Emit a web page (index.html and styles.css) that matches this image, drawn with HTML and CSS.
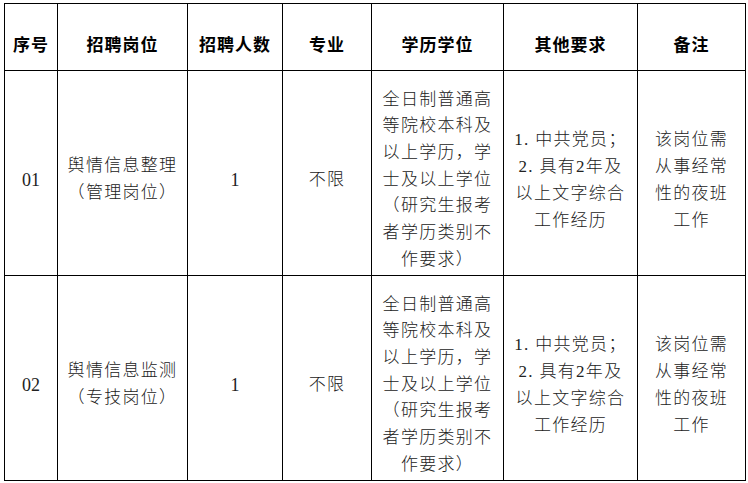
FILE: index.html
```html
<!DOCTYPE html>
<html lang="zh-CN">
<head>
<meta charset="utf-8">
<title>招聘岗位</title>
<link rel="stylesheet" href="styles.css">
</head>
<body>
<table class="jobs">
  <colgroup>
    <col class="c1"><col class="c2"><col class="c3"><col class="c4"><col class="c5"><col class="c6"><col class="c7">
  </colgroup>
  <thead>
    <tr class="head">
      <th>序号</th>
      <th>招聘岗位</th>
      <th>招聘人数</th>
      <th>专业</th>
      <th>学历学位</th>
      <th>其他要求</th>
      <th>备注</th>
    </tr>
  </thead>
  <tbody>
    <tr class="row">
      <td class="num">01</td>
      <td>舆情信息整理<br>（管理岗位）</td>
      <td class="num">1</td>
      <td>不限</td>
      <td class="edu">全日制普通高<br>等院校本科及<br>以上学历，学<br>士及以上学位<br>（研究生报考<br>者学历类别不<br>作要求）</td>
      <td class="req">1. 中共党员；<br>2. 具有2年及<br>以上文字综合<br>工作经历</td>
      <td class="req">该岗位需<br>从事经常<br>性的夜班<br>工作</td>
    </tr>
    <tr class="row">
      <td class="num">02</td>
      <td>舆情信息监测<br>（专技岗位）</td>
      <td class="num">1</td>
      <td>不限</td>
      <td class="edu">全日制普通高<br>等院校本科及<br>以上学历，学<br>士及以上学位<br>（研究生报考<br>者学历类别不<br>作要求）</td>
      <td class="req">1. 中共党员；<br>2. 具有2年及<br>以上文字综合<br>工作经历</td>
      <td class="req">该岗位需<br>从事经常<br>性的夜班<br>工作</td>
    </tr>
  </tbody>
</table>
</body>
</html>
```

FILE: styles.css
```css
html, body {
  margin: 0;
  padding: 0;
  background: #fff;
}
body {
  padding: 3px 0 0 4px;
}
.jobs {
  border-collapse: collapse;
  table-layout: fixed;
  width: 741px;
  color: #111;
}
.c1 { width: 53px; }
.c2 { width: 130px; }
.c3 { width: 95px; }
.c4 { width: 89px; }
.c5 { width: 132px; }
.c6 { width: 134px; }
.c7 { width: 108px; }

.jobs th, .jobs td {
  border: 1px solid #000;
  text-align: center;
  vertical-align: middle;
  padding: 0;
}
.head th {
  height: 67px;
  box-sizing: border-box;
  padding-top: 12px;
  font-family: "Noto Sans CJK SC", sans-serif;
  font-weight: 700;
  font-size: 17px;
  letter-spacing: 1px;
  color: #000;
}
.row td {
  height: 205px;
  box-sizing: border-box;
  padding-top: 14px;
  font-family: "Liberation Serif", "Noto Sans CJK SC", serif;
  font-weight: 300;
  font-size: 17px;
  letter-spacing: 1.3px;
  line-height: 26.7px;
  color: #222;
}
.row td.num {
  font-size: 18px;
  letter-spacing: 0;
}
.row td.req {
  line-height: 27px;
}
```
